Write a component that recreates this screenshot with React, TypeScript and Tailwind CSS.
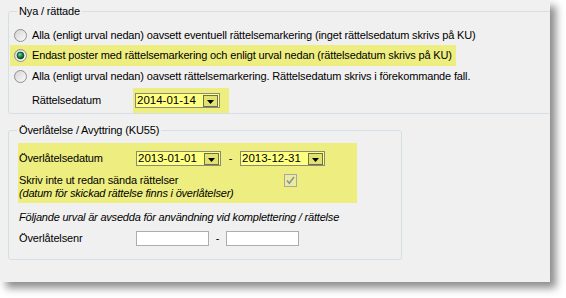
import * as React from "react";

function Radio({ checked }: { checked?: boolean }) {
  return (
    <svg width="13" height="13" viewBox="0 0 13 13" className="shrink-0">
      <defs>
        <linearGradient id="rbg" x1="0" y1="0" x2="1" y2="1">
          <stop offset="0" stopColor="#d2d2d2" />
          <stop offset="1" stopColor="#fdfdfd" />
        </linearGradient>
        <radialGradient id="rdot" cx="0.4" cy="0.35" r="0.7">
          <stop offset="0" stopColor="#6be29a" />
          <stop offset="0.5" stopColor="#1f8a4c" />
          <stop offset="1" stopColor="#0a3a1e" />
        </radialGradient>
      </defs>
      <circle cx="6.5" cy="6.5" r="6" fill="url(#rbg)" stroke="#8f8f8f" />
      {checked && <circle cx="6.5" cy="6.5" r="3.4" fill="url(#rdot)" stroke="#17402a" strokeWidth="0.8" />}
    </svg>
  );
}

function DateBox({ value }: { value: string }) {
  return (
    <div className="flex h-[15px] w-[85px] items-center justify-between border border-[#8a8a7a] bg-[#ffff80] pl-[1px] pr-[1px]">
      <span className="text-[11.5px] leading-[13px] tracking-normal">{value}</span>
      <div className="flex h-[12px] w-[15px] items-end justify-center border border-[#6e6e50] bg-[#e2e270] pb-[2px]">
        <svg width="7" height="4" viewBox="0 0 7 4">
          <path d="M0 0h7L3.5 4z" fill="#000" />
        </svg>
      </div>
    </div>
  );
}

function Checkbox() {
  return (
    <div className="flex h-[13px] w-[13px] items-center justify-center border border-[#a8a8a0] bg-[#ecec9a]">
      <svg width="9" height="9" viewBox="0 0 9 9">
        <path d="M1 4.5l2.3 2.8L8 1" fill="none" stroke="#8494a8" strokeWidth="1.6" />
      </svg>
    </div>
  );
}

export default function App() {
  const rows = [
    { text: "Alla (enligt urval nedan) oavsett eventuell rättelsemarkering (inget rättelsedatum skrivs på KU)", checked: false },
    { text: "Endast poster med rättelsemarkering och enligt urval nedan (rättelsedatum skrivs på KU)", checked: true },
    { text: "Alla (enligt urval nedan) oavsett rättelsemarkering. Rättelsedatum skrivs i förekommande fall.", checked: false },
  ];

  return (
    <div
      className="h-[298px] w-[566px] bg-white text-[11px] tracking-[-0.15px] text-black"
      style={{ fontFamily: '"Liberation Sans", Arial, sans-serif' }}
    >
      <div className="h-[282px] w-[550px] overflow-hidden bg-[#f0f0f0] pt-[5px] shadow-[6px_6px_8px_rgba(0,0,0,0.45)]">
        <fieldset className="ml-[8px] w-[560px] rounded-[3px] border border-[#d5dfe5]">
          <legend className="ml-[8px] px-[2px] leading-[13px]">Nya / rättade</legend>
          <div className="pt-[7px]">
            {rows.map((r, i) => (
              <div
                key={i}
                className={`ml-[1px] flex w-[446px] items-center gap-[5px] whitespace-nowrap pl-[4px] ${
                  r.checked ? "h-[21px] bg-[#eeee80]" : "h-[20px]"
                }`}
              >
                <Radio checked={r.checked} />
                <span className="leading-[13px]">{r.text}</span>
              </div>
            ))}
            <div className="mt-[2px] flex h-[25px] items-center pl-[23px]">
              <span className="w-[101px] leading-[13px]">Rättelsedatum</span>
              <div className="h-[25px] w-[96px] bg-[#eeee80] pl-[2px] pt-[5px]">
                <DateBox value="2014-01-14" />
              </div>
            </div>
          </div>
        </fieldset>

        <fieldset className="ml-[8px] mt-[10px] w-[394px] rounded-[3px] border border-[#d5dfe5]">
          <legend className="ml-[8px] px-[2px] leading-[13px]">Överlåtelse / Avyttring (KU55)</legend>
          <div className="pb-[13px] pt-[6px]">
            <div className="ml-[9px] h-[60px] w-[339px] bg-[#eeee80] pl-[1px] pt-[8px]">
              <div className="flex h-[15px] items-center">
                <span className="w-[117px] leading-[13px]">Överlåtelsedatum</span>
                <DateBox value="2013-01-01" />
                <span className="w-[19px] text-center">-</span>
                <DateBox value="2013-12-31" />
              </div>
              <div className="mt-[8px] flex items-center whitespace-nowrap">
                <span className="w-[265px] leading-[13px]">Skriv inte ut redan sända rättelser</span>
                <Checkbox />
              </div>
              <div className="whitespace-nowrap italic leading-[12px] tracking-[-0.2px]">
                (datum för skickad rättelse finns i överlåtelser)
              </div>
            </div>
            <div className="ml-[10px] mt-[8px] whitespace-nowrap italic leading-[13px] tracking-[-0.2px]">
              Följande urval är avsedda för användning vid komplettering / rättelse
            </div>
            <div className="ml-[10px] mt-[7px] flex h-[15px] items-center">
              <span className="w-[117px] leading-[13px]">Överlåtelsenr</span>
              <div className="h-[15px] w-[73px] border border-[#abadb3] bg-white" />
              <span className="w-[17px] text-center">-</span>
              <div className="h-[15px] w-[73px] border border-[#abadb3] bg-white" />
            </div>
          </div>
        </fieldset>
      </div>
    </div>
  );
}
